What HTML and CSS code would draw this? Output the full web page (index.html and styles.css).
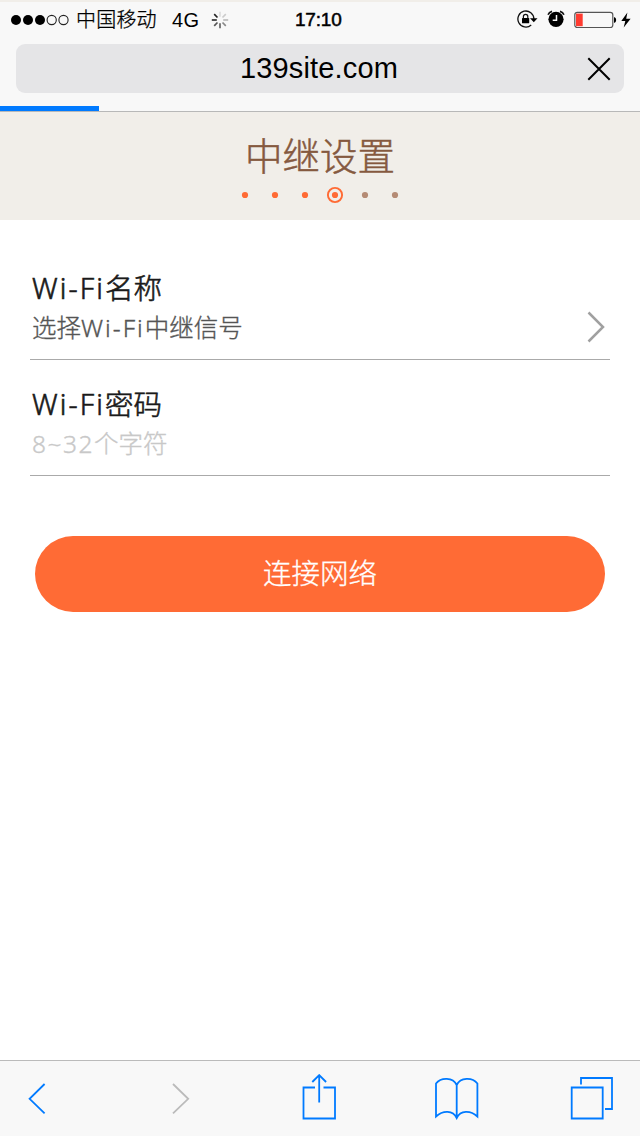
FILE: index.html
```html
<!DOCTYPE html>
<html lang="zh-CN">
<head>
<meta charset="utf-8">
<title>中继设置</title>
<link rel="stylesheet" href="styles.css">
</head>
<body>
<div class="screen">
  <header class="chrome">
    <div class="status">
      <svg class="signal" width="60" height="12" viewBox="0 0 60 12"><g><circle cx="6" cy="6" r="5"/><circle cx="18" cy="6" r="5"/><circle cx="30" cy="6" r="5"/></g><g fill="none" stroke="#222" stroke-width="1.1"><circle cx="41.7" cy="6" r="4.6"/><circle cx="53.5" cy="6" r="4.6"/></g></svg>
      <span class="carrier">中国移动</span>
      <span class="network">4G</span>
      <svg class="spinner" width="18" height="18" viewBox="0 0 18 18" fill="none" stroke-width="1.7"><path d="M9 .8v5" stroke="#ddd"/><path d="M14.8 3.2l-3.3 3.3" stroke="#ccc"/><path d="M17.2 9h-5" stroke="#bbb"/><path d="M14.8 14.8l-3.3-3.3" stroke="#888"/><path d="M9 17.2v-5" stroke="#666"/><path d="M3.2 14.8l3.3-3.3" stroke="#555"/><path d="M.8 9h5" stroke="#333"/><path d="M3.2 3.2l3.3 3.3" stroke="#222"/></svg>
      <span class="clock">17:10</span>
      <svg class="lock" width="21" height="18" viewBox="0 0 21 18"><path d="M16.9 9A8 8 0 1 0 14.2 15" fill="none" stroke="#111" stroke-width="1.3"/><path d="M13 8.3h7.5l-3.7 4z"/><rect x="5" y="8" width="7.2" height="5.2" rx=".5"/><path d="M6.4 8.3V6.6a2.2 2.2 0 0 1 4.4 0v1.7" fill="none" stroke="#111" stroke-width="1.2"/></svg>
      <svg class="alarm" width="18" height="18" viewBox="0 0 18 18"><circle cx="9" cy="9.3" r="7.6"/><path d="M9.5 5v5.2H5.7" fill="none" stroke="#f8f8f8" stroke-width="1.5"/><path d="M1.1 4.8Q2 2 5 1.3M16.9 4.8Q16 2 13 1.3" fill="none" stroke="#111" stroke-width="1.7"/></svg>
      <svg class="battery" width="43" height="18" viewBox="0 0 43 18"><rect x=".8" y="1.3" width="38" height="15.2" rx="2.5" fill="none" stroke="#555" stroke-width="1.2"/><path d="M40 6q2.2.4 2.2 3t-2.2 3z"/><rect x="2" y="2.6" width="6.7" height="12.6" fill="#ff3b30"/></svg>
      <svg class="bolt" width="10" height="16" viewBox="0 0 10 16"><path d="M6.4.5L.3 8.9h4L2.7 15.5 9.6 6.8H5.2z"/></svg>
    </div>
    <div class="address">
      <span class="url">139site.com</span>
      <svg class="stop" width="24" height="24" viewBox="0 0 24 24"><path d="M1.3 1.3l21.4 21.4M22.7 1.3L1.3 22.7" stroke="#000" stroke-width="2"/></svg>
    </div>
    <div class="progress"></div>
  </header>

  <section class="banner">
    <h1 class="title">中继设置</h1>
    <svg class="steps" width="160" height="18" viewBox="0 0 160 18"><g fill="#ff6b35"><circle cx="5" cy="9" r="3.1"/><circle cx="35" cy="9" r="3.1"/><circle cx="65" cy="9" r="3.1"/><circle cx="95" cy="9" r="3.1"/></g><circle cx="95" cy="9" r="7.1" fill="none" stroke="#ff6b35" stroke-width="1.9"/><g fill="#b58b74"><circle cx="125" cy="9" r="3.1"/><circle cx="155" cy="9" r="3.1"/></g></svg>
  </section>

  <main class="form">
    <div class="field">
      <div class="texts">
        <div class="label"><span class="latin">Wi-Fi</span>名称</div>
        <div class="value">选择<span class="latin">Wi-Fi</span>中继信号</div>
      </div>
      <svg class="chevron" width="20" height="32" viewBox="0 0 20 32"><path d="M1.5 1.5L16 16 1.5 30.5" fill="none" stroke="#a0a0a0" stroke-width="2.5"/></svg>
    </div>
    <div class="field">
      <div class="texts">
        <div class="label"><span class="latin">Wi-Fi</span>密码</div>
        <div class="value hint"><span class="latin">8~32</span>个字符</div>
      </div>
    </div>
    <button class="connect">连接网络</button>
  </main>

  <nav class="toolbar">
    <svg width="20" height="32" viewBox="28 1083 20 32"><path d="M44.6 1084L29.6 1098.8l15 14.6"/></svg>
    <svg class="off" width="20" height="32" viewBox="172 1083 20 32"><path d="M173 1084l15.2 14.8-15.2 14.6"/></svg>
    <svg class="tall" width="36" height="46" viewBox="302 1074 36 46"><path d="M315 1087.5h-11.5v31h31.5v-31h-11.5M319.2 1102.5v-27M312.3 1082l6.9-6.9 6.9 6.9"/></svg>
    <svg class="tall" width="46" height="46" viewBox="434 1074 46 46"><path d="M456.7 1085C453 1077 441 1077 436 1083.5V1116.5C443 1110 453 1110 456.7 1118C460.4 1110 470.4 1110 477.4 1116.5V1083.5C472.4 1077 460.4 1077 456.7 1085V1118"/></svg>
    <svg class="tall" width="44" height="46" viewBox="570 1074 44 46"><path d="M571.7 1087.5h31v31h-31zM581 1084.5v-6.5h31v31h-7"/></svg>
  </nav>
</div>
</body>
</html>
```
FILE: styles.css
```css
* { box-sizing: border-box; }
body { margin: 0; background: #fff; font-family: "Noto Sans", "Noto Sans CJK SC", sans-serif; }
.screen { width: 640px; height: 1136px; display: flex; flex-direction: column; }
.chrome { height: 112px; flex: none; background: #f8f8f8; border-top: 2px solid #f1eee9; border-bottom: 1px solid #b8b8b8; color: #000; font-family: "Liberation Sans", "Noto Sans CJK SC", sans-serif; }
.status { height: 36px; margin-bottom: 6px; padding-left: 10px; display: flex; align-items: center; white-space: nowrap; }
.signal { width: 60px; margin-top: -1px; }
.carrier { width: 96px; padding-left: 6px; font-size: 20px; font-weight: 300; letter-spacing: .2px; line-height: 34px; -webkit-text-stroke: .3px #000; }
.network { width: 45px; padding-left: 6px; font-size: 20px; letter-spacing: .4px; }
.spinner { margin-top: -1px; }
.clock { width: 48px; margin-left: 66px; font-size: 19px; letter-spacing: -.2px; -webkit-text-stroke: .5px #000; }
.lock { margin: -2px 0 0 174px; }
.alarm { margin: -2px 0 0 9px; }
.battery { margin: -1px 0 0 9px; }
.bolt { margin: -1px 0 0 4px; }
.address { height: 49px; margin: 0 16px 13px; padding-right: 13px; border-radius: 9px; background: #e5e5e7; display: grid; grid-template-columns: 1fr 24px; align-items: center; }
.url { padding-left: 35px; text-align: center; font-size: 29px; letter-spacing: .15px; }
.progress { width: 99px; height: 5px; background: #007aff; }
.banner { height: 108px; flex: none; background: #f1eee9; display: flex; flex-direction: column; align-items: center; }
.title { margin: 17px 0 3px; height: 54px; line-height: 54px; font-size: 37.5px; font-weight: 300; color: #85593f; -webkit-text-stroke: .5px #85593f; }
.steps { display: block; }
.form { flex: 1; padding: 24px 30px 0; display: flex; flex-direction: column; }
.field { height: 116px; padding: 24px 3px 0 2px; border-bottom: 1px solid #aaa; display: flex; justify-content: space-between; }
.label { height: 40px; line-height: 40px; font-size: 28.5px; font-weight: 300; color: #1a1a1a; -webkit-text-stroke: .6px #1a1a1a; }
.label .latin { letter-spacing: 2.1px; }
.value { height: 40px; line-height: 40px; font-size: 24.5px; font-weight: 300; color: #555; -webkit-text-stroke: .35px currentColor; }
.value .latin { letter-spacing: 2px; }
.hint { color: #c8c8c8; }
.hint .latin { letter-spacing: 1.5px; }
.chevron { margin-top: 43px; }
.connect { width: 570px; height: 76px; margin: 60px 5px 0; padding: 0 0 5px; border: 0; border-radius: 38px; background: #ff6b35; color: #fff; font: 300 28.5px "Noto Sans", "Noto Sans CJK SC", sans-serif; -webkit-text-stroke: .3px #fff; }
.toolbar { height: 76px; flex: none; padding: 0 0 0 28px; background: #f8f8f8; border-top: 1px solid #bbb; display: grid; grid-template-columns: 144px 130px 132px 136px 44px; align-items: center; }
.toolbar svg { fill: none; stroke: #007aff; stroke-width: 1.8; }
.toolbar .off { stroke: #bbb; }
.toolbar .tall { margin-top: -3px; }
```
